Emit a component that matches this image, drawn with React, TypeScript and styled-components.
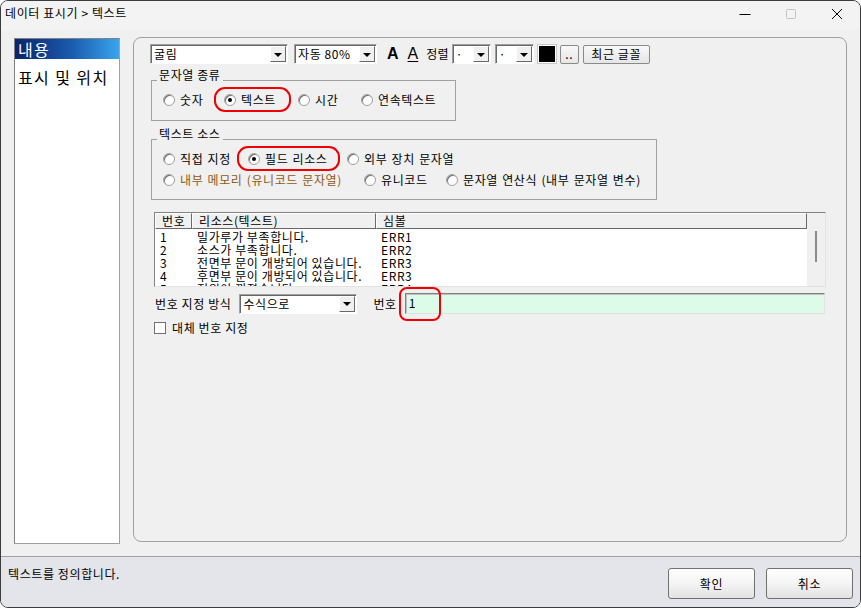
import React from 'react';
import styled, { createGlobalStyle } from 'styled-components';

const GlobalStyle = createGlobalStyle`
  html, body {
    margin: 0;
    padding: 0;
    background: #ffffff;
  }
  body {
    font-family: "Noto Sans CJK KR", "Noto Sans", sans-serif;
    font-size: 12px;
    letter-spacing: 0.6px;
    color: #000;
  }
  * {
    box-sizing: border-box;
  }
`;

const Window = styled.div`
  width: 861px;
  height: 608px;
  display: flex;
  flex-direction: column;
  background: #f0f0f0;
  border: 1px solid #3c3c3c;
  border-radius: 8px;
  overflow: hidden;
`;

const TitleBar = styled.div`
  height: 29px;
  flex: none;
  display: flex;
  align-items: center;
  padding-left: 4px;
  background: #f3f3f3;
  font-size: 12px;
  line-height: 14px;
`;

const TitleText = styled.span`
  flex: 1;
  margin-top: -5px;
`;

const WinButtons = styled.div`
  display: flex;
  align-self: flex-start;
  margin-top: 4px;
`;

const WinButton = styled.div`
  width: 46px;
  height: 18px;
  display: flex;
  align-items: center;
  justify-content: center;
`;

const Body = styled.div`
  flex: 1;
  display: flex;
  gap: 13px;
  padding: 8px 13px 12px 13px;
`;

const NavList = styled.div`
  width: 106px;
  flex: none;
  background: #fff;
  border: 1px solid #a0a0a0;
  border-top-color: #828282;
  border-left-color: #828282;
`;

const NavItem = styled.div<{ $active?: boolean }>`
  height: 20px;
  padding-left: 3px;
  font-size: 16px;
  letter-spacing: 1.4px;
  line-height: 20px;
  color: ${(p) => (p.$active ? '#fff' : '#000')};
  background: ${(p) =>
    p.$active ? 'linear-gradient(to right, #0a246a 0%, #1a5cb0 55%, #3aa4ec 100%)' : 'transparent'};
  margin-bottom: ${(p) => (p.$active ? '8px' : '0')};
`;

const Panel = styled.div`
  width: 714px;
  flex: none;
  margin-top: -1px;
  margin-bottom: 2px;
  border: 1px solid #a0a0a0;
  border-radius: 8px;
  padding: 6px 0 0 16px;
  display: flex;
  flex-direction: column;
  align-items: flex-start;
`;

const Toolbar = styled.div`
  display: flex;
  align-items: center;
  height: 20px;
`;

const Combo = styled.div<{ $w: number; $ml?: number }>`
  width: ${(p) => p.$w}px;
  height: 20px;
  margin-left: ${(p) => p.$ml ?? 0}px;
  display: flex;
  align-items: center;
  background: #fff;
  border: 1px solid;
  border-color: #a0a0a0 #fff #fff #a0a0a0;
  box-shadow: inset 1px 1px 0 #696969;
  padding: 1px 1px 1px 3px;
`;

const ComboText = styled.span`
  flex: 1;
  line-height: 16px;
  white-space: nowrap;
  overflow: hidden;
`;

const DropButton = styled.div`
  width: 16px;
  height: 16px;
  flex: none;
  background: #f0f0f0;
  border: 1px solid;
  border-color: #fff #696969 #696969 #fff;
  display: flex;
  align-items: center;
  justify-content: center;
  &::after {
    content: '';
    border-left: 4px solid transparent;
    border-right: 4px solid transparent;
    border-top: 4px solid #000;
    margin-top: 1px;
  }
`;

const FontGlyph = styled.span<{ $bold?: boolean; $ml: number }>`
  margin-left: ${(p) => p.$ml}px;
  font-family: "Liberation Sans", Arial, sans-serif;
  font-size: 16px;
  letter-spacing: 0;
  font-weight: ${(p) => (p.$bold ? 700 : 400)};
  text-decoration: ${(p) => (p.$bold ? 'none' : 'underline')};
  text-underline-offset: 2px;
  line-height: 18px;
`;

const ToolLabel = styled.span<{ $ml: number }>`
  margin-left: ${(p) => p.$ml}px;
  line-height: 14px;
  letter-spacing: 0.2px;
`;

const Swatch = styled.div`
  width: 18px;
  height: 18px;
  margin-left: 4px;
  background: #000;
  border: 1px solid #fff;
  outline: 1px solid #c8c8c8;
`;

const PushButton = styled.button<{ $w: number; $ml: number }>`
  width: ${(p) => p.$w}px;
  height: 19px;
  margin-left: ${(p) => p.$ml}px;
  padding: 0;
  font: inherit;
  font-size: 12px;
  line-height: 14px;
  letter-spacing: 0.6px;
  background: linear-gradient(#f8f8f8, #e6e6e6);
  border: 1px solid #8a8a8a;
  border-radius: 2px;
  color: #000;
`;

const GroupBox = styled.div<{ $w: number; $h: number; $mt: number }>`
  position: relative;
  width: ${(p) => p.$w}px;
  height: ${(p) => p.$h}px;
  margin-top: ${(p) => p.$mt}px;
  margin-left: 1px;
  border: 1px solid #a0a0a0;
  padding: 12px 0 0 11px;
  display: flex;
  flex-direction: column;
  gap: 7px;
`;

const GroupTitle = styled.span`
  position: absolute;
  top: -13px;
  left: 5px;
  padding: 0 2px;
  background: #f0f0f0;
  line-height: 14px;
`;

const RadioRow = styled.div`
  display: flex;
  align-items: center;
  height: 14px;
`;

const RadioItem = styled.label<{ $w?: number; $color?: string }>`
  position: relative;
  display: flex;
  align-items: center;
  gap: 5px;
  width: ${(p) => (p.$w ? `${p.$w}px` : 'auto')};
  flex: none;
  line-height: 14px;
  white-space: nowrap;
  color: ${(p) => p.$color ?? '#000'};
  word-spacing: 1px;
`;

const RadioDot = styled.span<{ $on?: boolean }>`
  width: 12px;
  height: 12px;
  flex: none;
  border-radius: 50%;
  border: 1px solid #a0a0a0;
  background: radial-gradient(circle at 60% 60%, #fff 55%, #e0e0e0 100%);
  box-shadow: inset 1px 1px 0 #707070;
  display: flex;
  align-items: center;
  justify-content: center;
  &::after {
    content: '';
    width: 4px;
    height: 4px;
    border-radius: 50%;
    background: ${(p) => (p.$on ? '#000' : 'transparent')};
  }
`;

const Mark = styled.span<{ $top: number; $left: number; $w: number; $h: number; $r: number }>`
  position: absolute;
  top: ${(p) => p.$top}px;
  left: ${(p) => p.$left}px;
  width: ${(p) => p.$w}px;
  height: ${(p) => p.$h}px;
  border: 2px solid #f00000;
  border-radius: ${(p) => p.$r}px;
  pointer-events: none;
`;

const ListView = styled.div`
  width: 672px;
  height: 75px;
  margin-top: 12px;
  margin-left: 4px;
  display: flex;
  background: #fff;
  border: 1px solid;
  border-color: #828282 #e3e3e3 #e3e3e3 #828282;
  overflow: hidden;
`;

const ListBody = styled.div`
  flex: 1;
  display: flex;
  flex-direction: column;
`;

const HeaderRow = styled.div`
  display: flex;
  height: 16px;
  flex: none;
  margin-bottom: 1px;
  background: #f0f0f0;
`;

const HeaderCell = styled.div<{ $w?: number }>`
  width: ${(p) => (p.$w ? `${p.$w}px` : 'auto')};
  flex: ${(p) => (p.$w ? 'none' : '1')};
  height: 16px;
  padding-left: 6px;
  line-height: 14px;
  border: 1px solid;
  border-color: #fff #696969 #696969 #fff;
`;

const DataRow = styled.div`
  display: flex;
  height: 13px;
  flex: none;
  line-height: 13px;
`;

const DataCell = styled.div<{ $w?: number }>`
  width: ${(p) => (p.$w ? `${p.$w}px` : 'auto')};
  flex: ${(p) => (p.$w ? 'none' : '1')};
  padding-left: 5px;
  white-space: nowrap;
  overflow: hidden;
`;

const ScrollTrack = styled.div`
  width: 18px;
  flex: none;
  background: #f0f0f0;
  display: flex;
  justify-content: center;
  padding-top: 18px;
`;

const ScrollThumb = styled.div`
  width: 2px;
  height: 31px;
  background: #8a8a8a;
`;

const FieldRow = styled.div`
  display: flex;
  align-items: center;
  margin-top: 6px;
  margin-left: 5px;
  height: 21px;
`;

const FieldLabel = styled.span<{ $ml?: number }>`
  margin-left: ${(p) => p.$ml ?? 0}px;
  line-height: 14px;
  white-space: nowrap;
`;

const NumberInputWrap = styled.div`
  position: relative;
  margin-left: 8px;
`;

const NumberInput = styled.div`
  width: 420px;
  height: 21px;
  background: #dcfce9;
  border: 1px solid;
  border-color: #828282 #e3e3e3 #e3e3e3 #828282;
  box-shadow: inset 1px 1px 0 #c0c0c0;
  padding-left: 3px;
  line-height: 18px;
`;

const CheckRow = styled.label`
  display: flex;
  align-items: center;
  gap: 6px;
  margin-top: 7px;
  margin-left: 4px;
  line-height: 14px;
`;

const CheckBox = styled.span`
  width: 12px;
  height: 12px;
  background: #fff;
  border: 1px solid #707070;
`;

const Footer = styled.div`
  height: 51px;
  flex: none;
  border-top: 1px solid #a0a0a0;
  background: #e4e4eb;
  display: flex;
  align-items: flex-start;
  padding: 11px 7px 0 7px;
`;

const StatusText = styled.span`
  flex: 1;
  line-height: 12px;
`;

const DialogButton = styled.button<{ $ml?: number }>`
  width: 87px;
  height: 31px;
  margin-left: ${(p) => p.$ml ?? 0}px;
  font: inherit;
  font-size: 12px;
  letter-spacing: 0.6px;
  color: #000;
  background: linear-gradient(#ffffff 0%, #f4f4f4 50%, #e2e2e2 100%);
  border: 1px solid #707070;
  border-radius: 3px;
`;

const Radio: React.FC<{ label: string; on?: boolean; w?: number; color?: string; children?: React.ReactNode }> = ({
  label,
  on,
  w,
  color,
  children,
}) => (
  <RadioItem $w={w} $color={color}>
    <RadioDot $on={on} />
    {label}
    {children}
  </RadioItem>
);

const rows = [
  ['1', '밀가루가 부족합니다.', 'ERR1'],
  ['2', '소스가 부족합니다.', 'ERR2'],
  ['3', '전면부 문이 개방되어 있습니다.', 'ERR3'],
  ['4', '후면부 문이 개방되어 있습니다.', 'ERR3'],
  ['5', '전원이 꺼졌습니다.', 'ERR4'],
];

const App: React.FC = () => {
  return (
    <>
      <GlobalStyle />
      <Window>
        <TitleBar>
          <TitleText>데이터 표시기 &gt; 텍스트</TitleText>
          <WinButtons>
            <WinButton>
              <svg width="12" height="12" viewBox="0 0 12 12">
                <line x1="0.5" y1="6.5" x2="11.5" y2="6.5" stroke="#000" strokeWidth="1" />
              </svg>
            </WinButton>
            <WinButton>
              <svg width="12" height="12" viewBox="0 0 12 12">
                <rect x="1.5" y="1.5" width="9" height="9" rx="1" fill="none" stroke="#c4c4c4" strokeWidth="1" />
              </svg>
            </WinButton>
            <WinButton>
              <svg width="12" height="12" viewBox="0 0 12 12">
                <path d="M1 1 L11 11 M11 1 L1 11" stroke="#000" strokeWidth="1" />
              </svg>
            </WinButton>
          </WinButtons>
        </TitleBar>

        <Body>
          <NavList>
            <NavItem $active>내용</NavItem>
            <NavItem>표시 및 위치</NavItem>
          </NavList>

          <Panel>
            <Toolbar>
              <Combo $w={138}>
                <ComboText>굴림</ComboText>
                <DropButton />
              </Combo>
              <Combo $w={83} $ml={6}>
                <ComboText>자동 80%</ComboText>
                <DropButton />
              </Combo>
              <FontGlyph $bold $ml={10}>A</FontGlyph>
              <FontGlyph $ml={9}>A</FontGlyph>
              <ToolLabel $ml={8}>정렬</ToolLabel>
              <Combo $w={39} $ml={3}>
                <ComboText>·</ComboText>
                <DropButton />
              </Combo>
              <Combo $w={39} $ml={4}>
                <ComboText>·</ComboText>
                <DropButton />
              </Combo>
              <Swatch />
              <PushButton $w={19} $ml={4}>..</PushButton>
              <PushButton $w={67} $ml={4}>최근 글꼴</PushButton>
            </Toolbar>

            <GroupBox $w={305} $h={41} $mt={16}>
              <GroupTitle>문자열 종류</GroupTitle>
              <RadioRow>
                <Radio label="숫자" w={61} />
                <Radio label="텍스트" on w={74}>
                  <Mark $top={-6} $left={-10} $w={77} $h={25} $r={11} />
                </Radio>
                <Radio label="시간" w={63} />
                <Radio label="연속텍스트" />
              </RadioRow>
            </GroupBox>

            <GroupBox $w={506} $h={61} $mt={18}>
              <GroupTitle>텍스트 소스</GroupTitle>
              <RadioRow>
                <Radio label="직접 지정" w={85} />
                <Radio label="필드 리소스" on w={99}>
                  <Mark $top={-6} $left={-11} $w={103} $h={25} $r={11} />
                </Radio>
                <Radio label="외부 장치 문자열" />
              </RadioRow>
              <RadioRow>
                <Radio label="내부 메모리 (유니코드 문자열)" w={201} color="#8b5a14" />
                <Radio label="유니코드" w={82} />
                <Radio label="문자열 연산식 (내부 문자열 변수)" />
              </RadioRow>
            </GroupBox>

            <ListView>
              <ListBody>
                <HeaderRow>
                  <HeaderCell $w={37}>번호</HeaderCell>
                  <HeaderCell $w={184}>리소스(텍스트)</HeaderCell>
                  <HeaderCell>심볼</HeaderCell>
                </HeaderRow>
                {rows.map((r) => (
                  <DataRow key={r[0]}>
                    <DataCell $w={37}>{r[0]}</DataCell>
                    <DataCell $w={184}>{r[1]}</DataCell>
                    <DataCell>{r[2]}</DataCell>
                  </DataRow>
                ))}
              </ListBody>
              <ScrollTrack>
                <ScrollThumb />
              </ScrollTrack>
            </ListView>

            <FieldRow>
              <FieldLabel>번호 지정 방식</FieldLabel>
              <Combo $w={118} $ml={8}>
                <ComboText>수식으로</ComboText>
                <DropButton />
              </Combo>
              <FieldLabel $ml={16}>번호</FieldLabel>
              <NumberInputWrap>
                <NumberInput>1</NumberInput>
                <Mark $top={-6} $left={-6} $w={42} $h={34} $r={8} />
              </NumberInputWrap>
            </FieldRow>

            <CheckRow>
              <CheckBox />
              대체 번호 지정
            </CheckRow>
          </Panel>
        </Body>

        <Footer>
          <StatusText>텍스트를 정의합니다.</StatusText>
          <DialogButton>확인</DialogButton>
          <DialogButton $ml={11}>취소</DialogButton>
        </Footer>
      </Window>
    </>
  );
};

export default App;
